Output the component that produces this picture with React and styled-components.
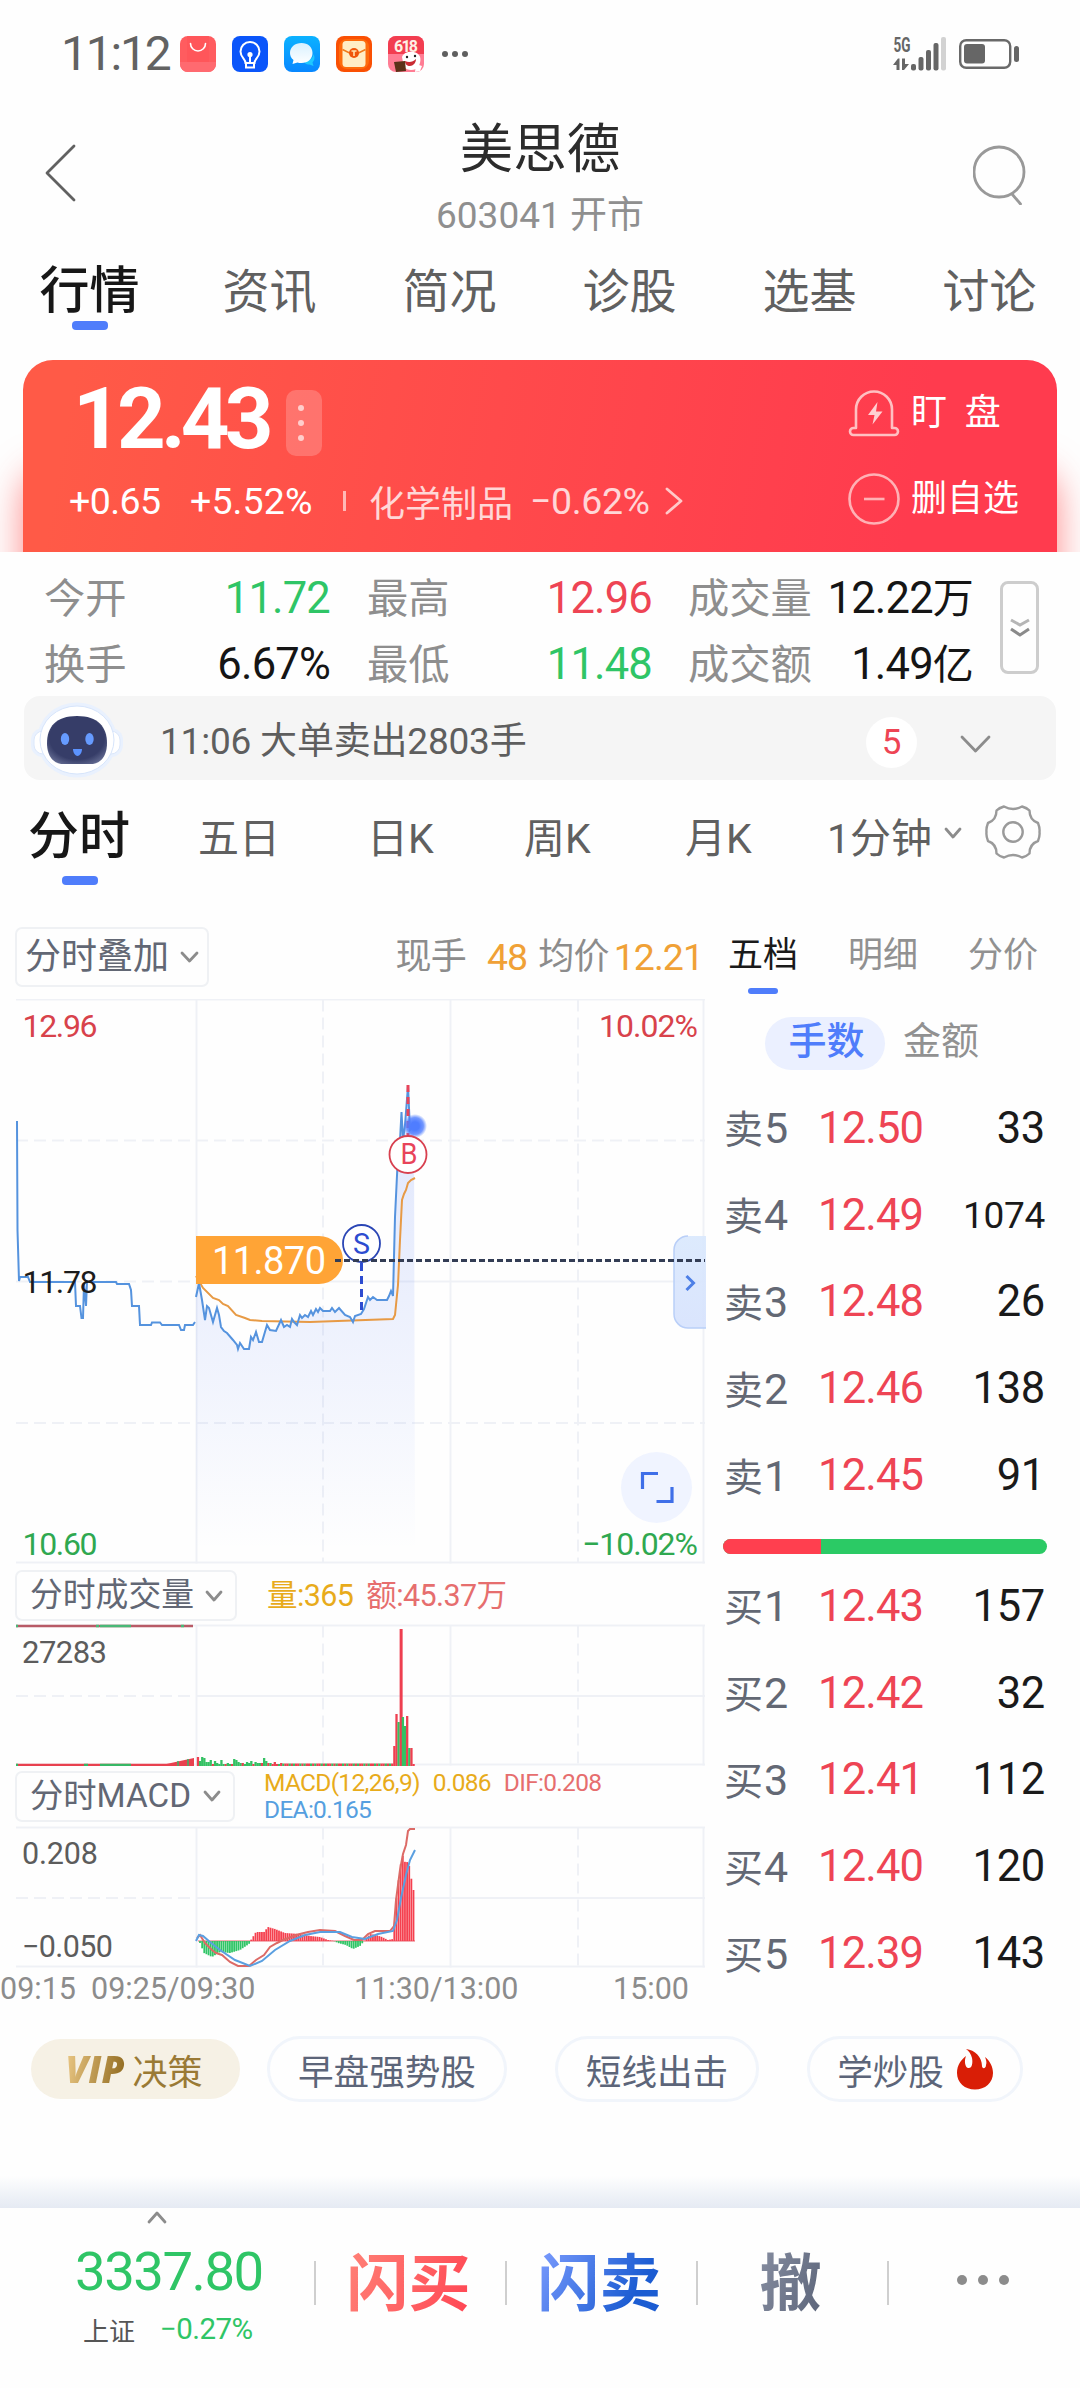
import React from "react";
import styled, { createGlobalStyle } from "styled-components";

const RED = "#ee4454";
const GREEN = "#2fc566";
const BLUE = "#4f7dfb";

const GlobalStyle = createGlobalStyle`
  * {
    box-sizing: border-box;
  }
  body {
    margin: 0;
    background: #fefefe;
    font-family: Roboto, "Noto Sans CJK SC", sans-serif;
    color: #1a1a1a;
  }
  svg {
    display: block;
    flex-shrink: 0;
  }
  svg text {
    font-family: Roboto, "Noto Sans CJK SC", sans-serif;
  }
`;

const Page = styled.div`
  width: 1080px;
  height: 2388px;
  display: flex;
  flex-direction: column;
  overflow: hidden;
`;

/* ---------- status bar ---------- */

const StatusBar = styled.div`
  display: flex;
  align-items: center;
  height: 108px;
  padding: 0 61px 0 61px;
`;

const Clock = styled.div`
  width: 119px;
  font-size: 48px;
  line-height: 60px;
  letter-spacing: -2.2px;
  color: #626262;
`;

const StatusIcons = styled.div`
  display: flex;
  align-items: center;
  gap: 16px;
`;

const StatusRight = styled.div`
  display: flex;
  align-items: center;
  gap: 12px;
  margin-left: auto;
`;

/* ---------- header ---------- */

const Header = styled.div`
  display: flex;
  justify-content: space-between;
  height: 132px;
  padding: 0 53px 0 45px;
`;

const BackButton = styled.div`
  padding-top: 36px;
  width: 68px;
`;

const SearchButton = styled.div`
  padding-top: 31px;
  display: flex;
  justify-content: flex-end;
  width: 60px;
`;

const TitleBox = styled.div`
  text-align: center;
  padding-top: 9px;
`;

const StockName = styled.div`
  font-size: 53.5px;
  line-height: 66px;
  color: #2c2c2c;
`;

const StockCode = styled.div`
  margin-top: 14px;
  font-size: 37px;
  line-height: 38px;
  color: #8f8f8f;
`;

const TopTabs = styled.div`
  display: grid;
  grid-template-columns: repeat(6, 180px);
  height: 120px;
`;

const TopTab = styled.div`
  display: flex;
  flex-direction: column;
  align-items: center;
  padding: 22px 1px 0 0;
  font-size: ${(props) => (props.$active ? "50px" : "47px")};
  font-weight: ${(props) => (props.$active ? 500 : 400)};
  line-height: 59px;
  color: ${(props) => (props.$active ? "#171717" : "#606060")};
`;

const Underline = styled.div`
  width: ${(props) => props.$width || 36}px;
  height: ${(props) => props.$height || 9}px;
  border-radius: 4px;
  background: ${BLUE};
`;

/* ---------- price card ---------- */

const CardWrap = styled.div`
  height: 192px;
  padding: 0 23px;
  overflow: hidden;
`;

const PriceCard = styled.div`
  display: flex;
  justify-content: space-between;
  height: 240px;
  padding: 19px 0 0 46px;
  border-radius: 30px;
  background: linear-gradient(100deg, #ff5a47 5%, #ff4a4b 45%, #ff3b4e 85%);
  box-shadow: 0 110px 36px 0 rgba(255, 60, 60, 0.6);
  color: #fff;
`;

const PriceRow = styled.div`
  display: flex;
  align-items: center;
  height: 80px;
`;

const Price = styled.div`
  width: 217px;
  padding-left: 4px;
  font-size: 85px;
  font-weight: 700;
  line-height: 80px;
  letter-spacing: -4.8px;
`;

const MoreButton = styled.div`
  display: flex;
  flex-direction: column;
  align-items: center;
  justify-content: center;
  gap: 9px;
  width: 36px;
  height: 66px;
  padding-right: 6px;
  margin-top: 8px;
  border-radius: 10px;
  background: rgba(255, 255, 255, 0.2);
`;

const Dot = styled.div`
  width: ${(props) => props.$size}px;
  height: ${(props) => props.$size}px;
  border-radius: 50%;
  background: ${(props) => props.$color};
`;

const ChangeRow = styled.div`
  display: flex;
  align-items: center;
  height: 60px;
  margin-top: 12px;
  font-size: 37.5px;
`;

const Change = styled.div`
  width: ${(props) => props.$width}px;
  letter-spacing: ${(props) => props.$spacing}px;
  white-space: nowrap;
`;

const Sector = styled.div`
  display: flex;
  align-items: center;
  margin-left: 31px;
  color: rgba(255, 255, 255, 0.78);
`;

const SectorSep = styled.div`
  width: 3px;
  height: 20px;
  margin-right: 23px;
  background: rgba(255, 255, 255, 0.6);
`;

const SectorName = styled.div`
  width: 161px;
  font-size: 36px;
  white-space: nowrap;
`;

const SectorChange = styled.div`
  width: 135px;
  letter-spacing: -0.4px;
  white-space: nowrap;
`;

const CardActions = styled.div`
  display: flex;
  flex-direction: column;
  gap: 26px;
  width: 209px;
  padding-top: 4px;
`;

const CardAction = styled.div`
  display: flex;
  align-items: center;
  gap: 11px;
  height: 60px;
  font-size: 36px;
  line-height: 50px;
  white-space: pre;
`;

/* ---------- quote stats ---------- */

const Stats = styled.div`
  display: flex;
  justify-content: space-between;
  height: 144px;
  padding: 14px 41px 0 44px;
`;

const StatsGrid = styled.div`
  display: grid;
  grid-template-columns: 323px 321px 285px;
  grid-auto-rows: 66px;
`;

const Stat = styled.div`
  display: flex;
  justify-content: space-between;
  align-items: center;
  padding-right: ${(props) => props.$gap || 0}px;
  font-size: 41.3px;
  line-height: 66px;
  color: #8e8e8e;
  white-space: nowrap;
`;

const StatValue = styled.span`
  font-size: 43.5px;
  letter-spacing: -0.8px;
  color: ${(props) => props.$color || "#151515"};
  small {
    font-size: 41px;
  }
`;

const ExpandButton = styled.div`
  display: flex;
  align-items: center;
  justify-content: center;
  width: 39px;
  height: 93px;
  margin-top: 15px;
  border: 3px solid #cdcdcd;
  border-radius: 8px;
`;

const AlertBar = styled.div`
  display: flex;
  align-items: center;
  height: 84px;
  margin: 0 24px;
  padding: 4px 65px 0 7px;
  border-radius: 16px;
  background: #f5f5f5;
`;

const AlertText = styled.div`
  flex: 1;
  margin: 3px 0 0 37px;
  font-size: 37px;
  line-height: 50px;
  color: #5e5e5e;
  letter-spacing: -0.2px;
`;

const AlertCount = styled.div`
  width: 51px;
  height: 51px;
  margin: 5px 43px 0 0;
  border-radius: 50%;
  background: #fff;
  color: ${RED};
  font-size: 35px;
  line-height: 52px;
  text-align: center;
`;

const AlertToggle = styled.div`
  margin-top: 8px;
`;

/* ---------- period tabs ---------- */

const PeriodTabs = styled.div`
  display: flex;
  align-items: flex-start;
  height: 138px;
  padding: 30px 0 0 28px;
`;

const PeriodTab = styled.div`
  width: ${(props) => props.$width}px;
  font-size: ${(props) => (props.$active ? "51px" : "41px")};
  font-weight: ${(props) => (props.$active ? 500 : 400)};
  line-height: ${(props) => (props.$active ? "54px" : "59px")};
  color: ${(props) => (props.$active ? "#171717" : "#606060")};
  white-space: nowrap;
  ${Underline} {
    margin: 12px 0 0 34px;
  }
`;

const PeriodSelect = styled(PeriodTab)`
  display: flex;
  align-items: flex-start;
  gap: 12px;
  svg {
    margin-top: 17px;
  }
`;

const SettingsButton = styled.div`
  margin: -5px 0 0 -1px;
`;

/* ---------- main area ---------- */

const Main = styled.div`
  display: flex;
  height: 1094px;
`;

const ChartColumn = styled.div`
  width: 706px;
  display: flex;
  flex-direction: column;
`;

const ChartHead = styled.div`
  display: flex;
  align-items: center;
  height: ${(props) => props.$height}px;
  padding: 0 ${(props) => props.$right || 0}px ${(props) => props.$bottom || 0}px 15px;
`;

const SelectBox = styled.div`
  display: flex;
  align-items: center;
  justify-content: space-between;
  width: ${(props) => props.$width}px;
  height: ${(props) => props.$height}px;
  padding: ${(props) => props.$pad};
  border: 2px solid #eff1f4;
  border-radius: 7px;
  font-size: ${(props) => props.$size}px;
  line-height: 1;
  color: #626774;
  white-space: nowrap;
`;

const Averages = styled.div`
  display: flex;
  margin-left: auto;
  font-size: 36px;
  line-height: 56px;
  color: #8c8c8c;
  letter-spacing: -0.7px;
  span {
    color: #f0a136;
    font-size: 37.5px;
    letter-spacing: -1px;
  }
  span:first-child {
    margin: 0 11px 0 21px;
  }
  span:last-child {
    margin-left: 5px;
  }
`;

const Indicator = styled.div`
  margin-left: ${(props) => props.$left}px;
  font-size: ${(props) => props.$size}px;
  line-height: 27px;
  letter-spacing: ${(props) => props.$spacing || 0}px;
  white-space: nowrap;
  span {
    margin-right: ${(props) => props.$gap}px;
    color: #e8ab1b;
  }
  em {
    font-style: normal;
    color: #e66e6e;
  }
  b {
    display: block;
    font-weight: 400;
    color: #559fe0;
  }
`;

const TimeAxis = styled.div`
  display: flex;
  height: 40px;
  font-size: 30.5px;
  line-height: 41px;
  color: #8c8c8c;
  div:nth-child(1) {
    width: 91px;
  }
  div:nth-child(2) {
    width: 263px;
  }
  div:nth-child(3) {
    width: 259px;
  }
`;

/* ---------- order book ---------- */

const OrderBook = styled.div`
  width: 374px;
  padding: 0 33px 0 17px;
`;

const BookTabs = styled.div`
  display: flex;
  justify-content: space-between;
  height: 99px;
  padding: 9px 9px 0 5px;
`;

const BookTab = styled.div`
  display: flex;
  flex-direction: column;
  align-items: center;
  gap: 4px;
  font-size: 35px;
  line-height: 57px;
  color: ${(props) => (props.$active ? "#1a1a1a" : "#919191")};
`;

const UnitSwitch = styled.div`
  display: flex;
  height: 68px;
  padding-left: 42px;
  font-size: 38px;
`;

const UnitActive = styled.div`
  width: 120px;
  height: 53px;
  border-radius: 27px;
  background: #ebf0ff;
  color: ${BLUE};
  font-weight: 500;
  line-height: 48px;
  text-align: center;
  text-indent: 3px;
`;

const Unit = styled.div`
  margin-left: 18px;
  line-height: 48px;
  color: #919191;
`;

const BookRow = styled.div`
  display: flex;
  align-items: center;
  height: 86.8px;
  padding-right: 2px;
  font-size: 43.5px;
`;

const BookLabel = styled.div`
  display: flex;
  align-items: center;
  width: 95px;
  font-size: 43px;
  color: #636874;
  span {
    margin: 0 1px 4px 1px;
    font-size: 39px;
  }
`;

const BookPrice = styled.div`
  letter-spacing: -0.8px;
  color: ${RED};
`;

const BookQty = styled.div`
  flex: 1;
  text-align: right;
  font-size: ${(props) => (props.$long ? "37px" : "43.5px")};
  letter-spacing: -0.3px;
`;

const RatioBar = styled.div`
  display: flex;
  height: 15px;
  margin: 20px 0 9px;
  border-radius: 8px;
  overflow: hidden;
  background: #2bca65;
`;

const RatioBuy = styled.div`
  width: 98px;
  background: #ff3f4f;
`;

/* ---------- shortcuts ---------- */

const Shortcuts = styled.div`
  display: flex;
  align-items: center;
  height: 66px;
  margin-top: 24px;
  padding-left: 31px;
`;

const Shortcut = styled.div`
  display: flex;
  align-items: center;
  justify-content: center;
  gap: 13px;
  width: ${(props) => props.$width}px;
  height: 66px;
  margin-right: 48px;
  border: 3px solid #f1f5fb;
  border-radius: 33px;
  font-size: 35.6px;
  color: #5c6579;
`;

const VipShortcut = styled(Shortcut)`
  gap: 5px;
  height: 60px;
  margin-right: 27px;
  padding-right: 3px;
  border: none;
  background: #f6f1e5;
  font-size: 35px;
  color: #9a7a35;
`;

const Vip = styled.span`
  font-family: "Open Sans", Roboto, sans-serif;
  font-size: 37px;
  line-height: 48px;
  font-weight: 800;
  font-style: italic;
  padding-right: 3px;
  background: linear-gradient(100deg, #ecc986, #8a6418);
  background-clip: text;
  -webkit-background-clip: text;
  color: transparent;
`;

/* ---------- bottom bar ---------- */

const BottomShade = styled.div`
  height: 32px;
  margin-top: auto;
  background: linear-gradient(to bottom, #fefefe, #f0f3f8 55%, #e5eaf3);
`;

const BottomBar = styled.div`
  display: flex;
  height: 180px;
`;

const IndexBox = styled.div`
  width: 314px;
  padding: 3px 0 0 75px;
  svg {
    margin-left: 72px;
  }
`;

const IndexValue = styled.div`
  margin-top: 19px;
  font-size: 54.5px;
  line-height: 56px;
  letter-spacing: -1.5px;
  color: ${GREEN};
`;

const IndexInfo = styled.div`
  display: flex;
  align-items: center;
  gap: 25px;
  height: 40px;
  margin-top: 10px;
  padding-left: 8px;
  font-size: 26px;
  color: #555;
  span {
    font-size: 29.5px;
    letter-spacing: -0.6px;
    color: ${GREEN};
  }
`;

const BottomDivider = styled.div`
  width: 2px;
  height: 44px;
  margin-top: 53px;
  background: #cfcfcf;
`;

const TradeButton = styled.div`
  width: 189px;
  padding: 35px 4px 0 0;
  text-align: center;
  span {
    font-size: 62px;
    font-weight: 700;
    line-height: 84px;
    background: ${(props) => props.$fill};
    background-clip: text;
    -webkit-background-clip: text;
    color: transparent;
  }
`;

const MoreActions = styled.div`
  display: flex;
  gap: 11px;
  margin: 67px 0 0 68px;
`;

function Chevron({ w, h, dir = "down", color = "#8c8c8c", stroke = 2.8 }) {
  const points = {
    down: `2,2 ${w / 2},${h - 2} ${w - 2},2`,
    up: `2,${h - 2} ${w / 2},2 ${w - 2},${h - 2}`,
    right: `2,2 ${w - 2},${h / 2} 2,${h - 2}`,
    left: `${w - 2},2 2,${h / 2} ${w - 2},${h - 2}`,
  }[dir];
  return (
    <svg width={w} height={h} fill="none" stroke={color} strokeWidth={stroke} strokeLinecap="round" strokeLinejoin="round">
      <polyline points={points} />
    </svg>
  );
}

function AppIcons() {
  return (
    <StatusIcons>
      <svg width="36" height="36" viewBox="0 0 36 36">
        <rect width="36" height="36" rx="8" fill="#ff5c5f" />
        <path d="M7 0h22v36H7z" fill="#ff5257" opacity=".6" />
        <path d="M0 26h36v2a8 8 0 0 1-8 8H8a8 8 0 0 1-8-8z" fill="#ff6a70" />
        <path d="M10.500 7.500a7.500 7.500 0 0 0 15 0" fill="none" stroke="#fff" strokeWidth="1.600" strokeLinecap="round" />
      </svg>
      <svg width="36" height="36" viewBox="0 0 36 36" fill="none" stroke="#fff" strokeWidth="2">
        <rect width="36" height="36" rx="8" fill="#0a55fa" stroke="none" />
        <path d="M13.500 27c0-4-5-5.500-5-11.500a9.500 9.500 0 0 1 19 0c0 6-5 7.500-5 11.500z" />
        <path d="M14 28v3.500h8V28M18 19v8" />
        <circle cx="18" cy="18.500" r="1.600" fill="#fff" />
      </svg>
      <svg width="36" height="36" viewBox="0 0 36 36">
        <defs>
          <linearGradient id="chatBg" x1="0" y1="0" x2="0" y2="1">
            <stop offset="0" stopColor="#0cb2ff" />
            <stop offset="1" stopColor="#0887ff" />
          </linearGradient>
          <linearGradient id="chatBubble" x1="0" y1="0" x2="0" y2="1">
            <stop offset="0" stopColor="#d8f1ff" />
            <stop offset="1" stopColor="#fff" />
          </linearGradient>
        </defs>
        <rect width="36" height="36" rx="8" fill="url(#chatBg)" />
        <path d="M20 24c4 2 9-1 9.500-6 2 4 .5 7-1 8.500l1 3.500-4-1.500c-3 .6-5-1-5.500-4.500z" fill="#1fc8ff" />
        <path d="M17.500 7C24 7 28.500 11 28.500 17S24 27 17.500 27c-1.500 0-3-.2-4-.6L8.500 28l1-4C7 22 6 19.500 6 17 6 11 11 7 17.500 7z" fill="url(#chatBubble)" />
      </svg>
      <svg width="36" height="36" viewBox="0 0 36 36">
        <rect width="36" height="36" rx="8" fill="#fa5003" />
        <rect x="3" y="3" width="30" height="30" rx="8" fill="#ff7d13" opacity=".6" />
        <rect x="6.500" y="5" width="23" height="26" rx="3.500" fill="#ffedc6" />
        <path d="M6.500 13.500l7 3.500h9l7-3.500" fill="none" stroke="#f07a1a" strokeWidth="1.500" />
        <circle cx="18" cy="17" r="5" fill="#f0560b" />
        <path d="M15.500 15h5M18 15v5" stroke="#ffe3b0" strokeWidth="1.600" />
      </svg>
      <svg width="36" height="36" viewBox="0 0 36 36">
        <rect width="36" height="36" rx="8" fill="#ff7d94" />
        <path d="M0 18V8a8 8 0 0 1 8-8h20a8 8 0 0 1 8 8v10z" fill="#f23d50" />
        <text x="6" y="16" fontSize="16" fontWeight="700" fill="#fff0e4" textLength="24">618</text>
        <path d="M14 21c2-6 13-7 17-2 3 3 1 12-3 14-5 2-9 1-12-2z" fill="#fff" />
        <circle cx="19" cy="21" r="1.200" fill="#222" />
        <circle cx="27" cy="20" r="1.200" fill="#222" />
        <path d="M17 25c4 2 8 1 11-2 0 4-3 7-6 7s-5-2-5-5z" fill="#c92b33" />
        <path d="M6 26l11-1 1 10-10 1z" fill="#5b3218" />
        <path d="M28 28l6 2-2 5-5 1z" fill="#fff" />
      </svg>
      <svg width="28" height="8" viewBox="0 0 28 8" fill="#5f5f5f">
        <circle cx="5" cy="4" r="3" />
        <circle cx="15" cy="4" r="3" />
        <circle cx="25" cy="4" r="3" />
      </svg>
    </StatusIcons>
  );
}

function Signal() {
  return (
    <svg width="54" height="48" viewBox="0 -6 54 48" fill="#666">
      <text x="0.500" y="16" fontSize="20" fontWeight="700" textLength="17" lengthAdjust="spacingAndGlyphs">5G</text>
      <path d="M0 29l5-6.500h1.500V34H3.500v-5zM9 22.500h3V28h4l-5 6H9z" />
      <rect x="18" y="28" width="5" height="6.500" rx="2" />
      <rect x="25.500" y="21" width="5" height="13.500" rx="2" />
      <rect x="33" y="14" width="5" height="20.500" rx="2" />
      <rect x="40.500" y="7" width="5" height="27.500" rx="2" />
      <rect x="48" y="1" width="5" height="33.500" rx="2" fill="#d2d2d2" />
    </svg>
  );
}

function Battery() {
  return (
    <svg width="60" height="30" viewBox="0 0 60 30">
      <rect x="1.200" y="1.200" width="50" height="27.600" rx="6" fill="none" stroke="#696969" strokeWidth="2.400" />
      <rect x="5" y="5" width="21" height="19.500" rx="3" fill="#666" />
      <rect x="55" y="7" width="5" height="16" rx="2.500" fill="#666" />
    </svg>
  );
}

function AlarmIcon() {
  return (
    <svg width="52" height="48" viewBox="0 0 52 48" fill="none" stroke="#ffc0c2" strokeWidth="2.600" strokeLinejoin="round">
      <path d="M8 39V20.500a18 18 0 0 1 36 0V39h2.500a3.500 3.500 0 0 1 0 7h-41a3.500 3.500 0 0 1 0-7z" />
      <path d="M29.500 13L20 26h6.500L24.500 35.500 34.500 22.500h-6.500z" fill="#ffd0d2" stroke="none" />
    </svg>
  );
}

function RemoveIcon() {
  return (
    <svg width="52" height="52" viewBox="0 0 52 52" fill="none" stroke="#ffb1b5" strokeWidth="2.600">
      <circle cx="26" cy="26" r="24.500" />
      <path d="M16 26h20.500" />
    </svg>
  );
}

function Robot() {
  return (
    <svg width="92" height="76" viewBox="0 0 92 76">
      <defs>
        <radialGradient id="face" cx=".5" cy=".45" r=".65">
          <stop offset=".7" stopColor="#363d68" />
          <stop offset="1" stopColor="#6a7298" />
        </radialGradient>
      </defs>
      <ellipse cx="46" cy="38" rx="40" ry="37.500" fill="#e9f1fe" />
      <rect x="0" y="26" width="92" height="29" rx="12" fill="#e9f1fe" />
      <rect x="3" y="29" width="86" height="23" rx="9" fill="#fff" stroke="#dce8fb" />
      <ellipse cx="46" cy="38" rx="37" ry="34" fill="#fff" stroke="#d7e5fb" />
      <path d="M46 14c21 0 30 11 30 27 0 15-8 21-16 21H32c-8 0-16-6-16-21 0-16 9-27 30-27z" fill="url(#face)" />
      <ellipse cx="34" cy="37" rx="4.200" ry="6" fill="#669bff" />
      <ellipse cx="58.500" cy="37" rx="4.200" ry="6" fill="#669bff" />
      <path d="M42 47h9c0 4-2.500 7-4.500 7S42 51 42 47z" fill="#5c93ff" />
    </svg>
  );
}

function Gear() {
  return (
    <svg width="56" height="54" viewBox="-28 -27 56 54" fill="none" stroke="#9a9a9a" strokeWidth="2.400" strokeLinejoin="round">
      <path d="M-9-25.500Q0-20.500 9-25.500Q14-24 16.500-21.500Q16.500-12 25-9Q27-4 26.500 0Q27 4 25 9Q16.500 12 16.500 21.500Q14 24 9 25.500Q0 20.500 -9 25.500Q-14 24 -16.500 21.500Q-16.500 12 -25 9Q-27 4 -26.500 0Q-27-4 -25-9Q-16.500-12 -16.500-21.500Q-14-24 -9-25.500Z" />
      <circle r="9.700" />
    </svg>
  );
}

const preLine =
  "17,1121 17.500,1230 19,1281 20,1277 28,1277 30,1282 75,1282 76,1306 80,1306 81.500,1318 83,1318 84,1284 86,1306 87,1282 116,1282 117,1284 129,1284 131,1290 132,1306 139,1306 140,1325 151,1325 152,1322.500 160,1322.500 162,1325 179,1325 181,1330 184,1330 185,1325 193,1325 195,1322";
const priceLine =
  "196,1297 199,1283 202,1300 205,1320 207,1306 209,1308 213,1322 217,1308 219,1315 221,1327 224,1331 227,1333 233,1340 237,1345 238,1349 240,1343 244,1349 249,1349 251,1337 253,1340 256,1332 259,1342 262,1342 267,1325 270,1330 276,1331 281,1320 284,1327 287,1325 290,1327 292,1319 294,1322 297,1325 300,1315 302,1318 305,1315 308,1317 311,1311 313,1315 316,1309 318,1312 320,1308 323,1311 330,1311 332,1308 335,1312 339,1308 345,1315 350,1317 353,1322 355,1316 361,1314 364,1309 368,1297 370,1300 373,1297 377,1300 387,1300 389,1296 391,1291 393,1296 395,1217 397.500,1165 400,1140 401.500,1112 403,1140 405,1125 408,1086 410,1130 414,1126";
const avgLine =
  "196,1276 203,1288 213,1298 219,1300 223,1304 228,1306 236,1315 245,1318 250,1320 262,1321 310,1322 393,1319 395,1315 396,1305 398,1285 400,1240 402,1200 404,1194 406,1190 408,1183 411,1180 415,1178";

function GridLines({ top, bottom, mid }) {
  return (
    <g stroke="#eff1f6" strokeWidth="2" fill="none">
      <path d={`M16 ${top}H705`} />
      <path d={`M196.500 ${top}V${bottom + 1}M450.500 ${top}V${bottom + 1}M703.500 ${top}V${bottom + 1}`} />
      <path d={`M323 ${top}V${bottom}M578 ${top}V${bottom}`} strokeDasharray="12 6" />
      <path d={`M16 ${mid}H196`} strokeDasharray="12 6" />
      <path d={`M196 ${mid}H705`} />
      <path d={`M16 ${bottom}H705`} />
    </g>
  );
}

function PriceChart() {
  return (
    <svg width="706" height="568" viewBox="0 999 706 568">
      <defs>
        <linearGradient id="area" x1="0" y1="1130" x2="0" y2="1550" gradientUnits="userSpaceOnUse">
          <stop offset="0" stopColor="#5f83f5" stopOpacity=".18" />
          <stop offset=".6" stopColor="#5f83f5" stopOpacity=".08" />
          <stop offset="1" stopColor="#5f83f5" stopOpacity="0" />
        </linearGradient>
        <radialGradient id="pulse">
          <stop offset=".35" stopColor="#4f7dff" />
          <stop offset=".7" stopColor="#4f7dff" stopOpacity=".8" />
          <stop offset="1" stopColor="#4f7dff" stopOpacity="0" />
        </radialGradient>
        <linearGradient id="handle" x1="0" y1="0" x2="0" y2="1">
          <stop offset="0" stopColor="#d9e8fd" />
          <stop offset="1" stopColor="#d6e2fd" />
        </linearGradient>
      </defs>
      <GridLines top={999.5} bottom={1562.5} mid={1281.5} />
      <path d="M16 1140.500H705M16 1423H705" stroke="#eff1f6" strokeWidth="2" strokeDasharray="12 6" />
      <polygon points={`196,1562 ${priceLine} 415,1562`} fill="url(#area)" />
      <polyline points={preLine} fill="none" stroke="#5593de" strokeWidth="2" />
      <polyline points={avgLine} fill="none" stroke="#e79a45" strokeWidth="2" />
      <polyline points={priceLine} fill="none" stroke="#5593de" strokeWidth="2" />
      <path d="M674 1250a14 14 0 0 1 14-14h18v92h-18a14 14 0 0 1-14-14z" fill="url(#handle)" fillOpacity=".9" />
      <path d="M674 1250a14 14 0 0 1 14-14M674 1250v64a14 14 0 0 0 14 14h18" fill="none" stroke="#b9cff8" strokeWidth="1.500" />
      <path d="M686.500 1276l7 7-7 7" fill="none" stroke="#4d7fe6" strokeWidth="3" />
      <path d="M408 1085V1135" stroke="#e8445a" strokeWidth="3" strokeDasharray="7 5" />
      <circle cx="415" cy="1126" r="12" fill="url(#pulse)" />
      <circle cx="408" cy="1154.500" r="18.500" fill="#fff" stroke="#d8404f" strokeWidth="1.800" />
      <text x="400.500" y="1164" fontSize="29" fill="#e8445a" textLength="17" lengthAdjust="spacingAndGlyphs">B</text>
      <path d="M196 1236h123a24 24 0 0 1 0 48H196z" fill="#ffa436" />
      <text x="212" y="1274" fontSize="38" fill="#fff" textLength="114">11.870</text>
      <circle cx="361.500" cy="1243.500" r="18.500" fill="#fff" stroke="#2b46b5" strokeWidth="1.800" />
      <text x="353" y="1253.500" fontSize="29" fill="#2d4cd0" textLength="17" lengthAdjust="spacingAndGlyphs">S</text>
      <path d="M361.500 1263V1314" stroke="#2d4cd0" strokeWidth="3" strokeDasharray="8 5" />
      <path d="M335 1260.500H705" stroke="#333d55" strokeWidth="3" strokeDasharray="6 3" />
      <circle cx="656.500" cy="1487.500" r="35.500" fill="#f0f4ff" />
      <path d="M642.500 1489V1473.500H658M656.500 1501.500H672V1487" fill="none" stroke="#3f6fe8" strokeWidth="3.200" />
      <g fontSize="32">
        <text x="22.500" y="1037" fill="#d8424b" textLength="75">12.96</text>
        <text x="22.500" y="1292.500" fill="#1c1c1c" textLength="75">11.78</text>
        <text x="22.500" y="1554.500" fill="#2fa850" textLength="75">10.60</text>
        <text x="599" y="1037" fill="#d8424b" textLength="99">10.02%</text>
        <text x="582" y="1554.500" fill="#2fa850" textLength="116">−10.02%</text>
      </g>
    </svg>
  );
}

// one bar per minute since the open, negative = falling minute
const volumes = [
  9, -5, -9, -8, -4, -4, -6, 2, -5, -3, -2, -6, -2, 2, -3, -2, 2, -7, -6, -4, -3, 3, -2, -4, -3,
  -5, 2, -4, -3, -3, 3, -8, -5, 3, -3, 2, 4, 2, -2, 3,
];
for (let i = 40; i < 92; i++) volumes.push((i * 7) % 5 < 2 ? -2.5 : 2.5);
volumes.push(20, 52, -44, 137, -49, -40, 50, -18, 18, 2);

function VolumeChart() {
  return (
    <svg width="706" height="142" viewBox="0 1624 706 142">
      <GridLines top={1625.5} bottom={1764.5} mid={1696} />
      <path d="M16 1626H193" stroke="#b85a66" strokeWidth="2.500" />
      <path d="M16 1626h2M96 1626h3M100 1626h31M181 1626h3" stroke="#49b877" strokeWidth="2.500" />
      <path d="M16 1765H193" stroke="#e8414f" strokeWidth="2.500" />
      <path d="M16 1765h2M84 1765h4M100 1765h31" stroke="#37b765" strokeWidth="2.500" />
      <path d="M162 1765l18-4 14-3v8z" fill="#e8414f" />
      <path d="M178 1761v5M188 1759v7" stroke="#37b765" strokeWidth="1.500" />
      {volumes.map((v, i) => (
        <rect
          key={i}
          x={196.8 + i * 2.135}
          y={1766 - Math.abs(v)}
          width={Math.abs(v) > 100 ? 3 : 2.3}
          height={Math.abs(v)}
          fill={v > 0 ? "#ee3f50" : "#34c163"}
        />
      ))}
      <text x="22" y="1663" fontSize="31" fill="#5c5c5c" textLength="85">27283</text>
    </svg>
  );
}

const macdBars = [
  [200, -2], [204, -12], [212, -16], [220, -11], [230, -12], [240, -9], [249, -3], [251, 1], [256, 9],
  [264, 9], [268, 14], [275, 12], [285, 8], [300, 7], [310, 5], [320, 4], [328, 1], [334, 0], [338, -2],
  [346, -4], [353, -8], [360, -5], [365, 1], [370, 7], [376, 6], [382, 4], [388, 1], [393, 2], [395, 20],
  [397, 52], [399.5, 66], [401.7, 86], [404, 84], [406, 74], [408, 83], [410, 70], [412.3, 57], [414.5, 46],
];

function macdAt(x) {
  for (let i = 1; i < macdBars.length; i++) {
    const [x0, y0] = macdBars[i - 1];
    const [x1, y1] = macdBars[i];
    if (x <= x1) return y0 + ((y1 - y0) * (x - x0)) / (x1 - x0);
  }
  return 46;
}

function MacdChart() {
  const bars = Array.from({ length: 101 }, (_, i) => 200 + i * 2.135);
  return (
    <svg width="706" height="142" viewBox="0 1826 706 142">
      <GridLines top={1827.5} bottom={1966.5} mid={1898} />
      <path d="M198 1941H415" stroke="#e8606c" strokeWidth="1" />
      {bars.map((x) => {
        const h = macdAt(x);
        return (
          <rect
            key={x}
            x={x - 0.9}
            y={h > 0 ? 1941 - h : 1941}
            width="1.800"
            height={Math.abs(h)}
            fill={h > 0 ? "#f5404f" : "#2fc566"}
          />
        );
      })}
      <polyline
        points="197,1938 200,1935 205,1943 212,1950 216,1953 222,1955 230,1962 238,1966 249,1966 256,1960 264,1955 270,1947 277,1943 283,1940 296,1935 308,1932 320,1930 335,1931 345,1936 354,1940 362,1940 368,1934 375,1931 390,1931 394,1926 396,1900 400,1870 403,1854 406,1845 408,1831 410,1829 415,1829"
        fill="none"
        stroke="#dc6a66"
        strokeWidth="2"
      />
      <polyline
        points="196,1941 199,1935 203,1936 210,1942 220,1950 235,1960 250,1966 262,1961 275,1950 290,1941 305,1935 320,1932 340,1932 352,1937 365,1939 378,1934 393,1931 397,1920 401,1898 406,1875 410,1860 415,1850"
        fill="none"
        stroke="#5a9fe0"
        strokeWidth="2"
      />
      <g fontSize="30.500" fill="#5c5c5c">
        <text x="22" y="1864" textLength="76">0.208</text>
        <text x="22" y="1957" textLength="91">−0.050</text>
      </g>
    </svg>
  );
}

const stats = [
  ["今开", "11.72", GREEN],
  ["最高", "12.96", RED],
  ["成交量", "12.22", null, "万"],
  ["换手", "6.67%"],
  ["最低", "11.48", GREEN],
  ["成交额", "1.49", null, "亿"],
];

const sells = [
  ["5", "12.50", "33"],
  ["4", "12.49", "1074"],
  ["3", "12.48", "26"],
  ["2", "12.46", "138"],
  ["1", "12.45", "91"],
];
const buys = [
  ["1", "12.43", "157"],
  ["2", "12.42", "32"],
  ["3", "12.41", "112"],
  ["4", "12.40", "120"],
  ["5", "12.39", "143"],
];

function BookRows({ side, rows }) {
  return rows.map(([level, price, qty]) => (
    <BookRow key={level}>
      <BookLabel>
        <span>{side}</span>
        {level}
      </BookLabel>
      <BookPrice>{price}</BookPrice>
      <BookQty $long={qty.length > 3}>{qty}</BookQty>
    </BookRow>
  ));
}

function App() {
  return (
    <Page>
      <GlobalStyle />
      <StatusBar>
        <Clock>11:12</Clock>
        <AppIcons />
        <StatusRight>
          <Signal />
          <Battery />
        </StatusRight>
      </StatusBar>

      <Header>
        <BackButton>
          <Chevron w={31} h={58} dir="left" color="#616161" />
        </BackButton>
        <TitleBox>
          <StockName>美思德</StockName>
          <StockCode>603041 开市</StockCode>
        </TitleBox>
        <SearchButton>
          <svg width="54" height="66" viewBox="0 0 54 66" fill="none" stroke="#999" strokeWidth="2.800" strokeLinecap="round">
            <circle cx="26" cy="33" r="25" />
            <path d="M39 55l8.500 10" />
          </svg>
        </SearchButton>
      </Header>

      <TopTabs>
        {["行情", "资讯", "简况", "诊股", "选基", "讨论"].map((name, i) => (
          <TopTab key={name} $active={i === 0}>
            {name}
            {i === 0 && <Underline />}
          </TopTab>
        ))}
      </TopTabs>

      <CardWrap>
        <PriceCard>
          <div>
            <PriceRow>
              <Price>12.43</Price>
              <MoreButton>
                <Dot $size={6} $color="rgba(255,255,255,.65)" />
                <Dot $size={6} $color="rgba(255,255,255,.65)" />
                <Dot $size={6} $color="rgba(255,255,255,.65)" />
              </MoreButton>
            </PriceRow>
            <ChangeRow>
              <Change $width={121} $spacing={-0.6}>+0.65</Change>
              <Change $width={122} $spacing={0.1}>+5.52%</Change>
              <Sector>
                <SectorSep />
                <SectorName>化学制品</SectorName>
                <SectorChange>−0.62%</SectorChange>
                <Chevron w={18} h={28} dir="right" color="#ffc9c9" />
              </Sector>
            </ChangeRow>
          </div>
          <CardActions>
            <CardAction>
              <AlarmIcon />
              {"盯  盘"}
            </CardAction>
            <CardAction>
              <RemoveIcon />
              删自选
            </CardAction>
          </CardActions>
        </PriceCard>
      </CardWrap>

      <Stats>
        <StatsGrid>
          {stats.map(([label, value, color, unit], i) => (
            <Stat key={label} $gap={[37, 36, 0][i % 3]}>
              {label}
              <StatValue $color={color}>
                {value}
                {unit && <small>{unit}</small>}
              </StatValue>
            </Stat>
          ))}
        </StatsGrid>
        <ExpandButton>
          <svg width="20" height="20" viewBox="0 0 20 20" fill="none" strokeWidth="3">
            <path d="M1 2l9 5 9-5" stroke="#b5b5b5" />
            <path d="M1 11l9 6 9-6" stroke="#8a8a8a" />
          </svg>
        </ExpandButton>
      </Stats>

      <AlertBar>
        <Robot />
        <AlertText>11:06 大单卖出2803手</AlertText>
        <AlertCount>5</AlertCount>
        <AlertToggle>
          <Chevron w={31} h={18} />
        </AlertToggle>
      </AlertBar>

      <PeriodTabs>
        <PeriodTab $active $width={170}>
          分时
          <Underline />
        </PeriodTab>
        <PeriodTab $width={169}>五日</PeriodTab>
        <PeriodTab $width={157}>日K</PeriodTab>
        <PeriodTab $width={161}>周K</PeriodTab>
        <PeriodTab $width={142}>月K</PeriodTab>
        <PeriodSelect $width={159}>
          1分钟
          <Chevron w={18} h={12} />
        </PeriodSelect>
        <SettingsButton>
          <Gear />
        </SettingsButton>
      </PeriodTabs>

      <Main>
        <ChartColumn>
          <ChartHead $height={81} $bottom={3} $right={3}>
            <SelectBox $width={194} $height={60} $size={36} $pad="0 8px 0 8px">
              分时叠加
              <Chevron w={19} h={12} />
            </SelectBox>
            <Averages>
              现手<span>48</span>均价<span>12.21</span>
            </Averages>
          </ChartHead>
          <PriceChart />
          <ChartHead $height={57}>
            <SelectBox $width={222} $height={51} $size={32.8} $pad="0 12px 0 13px">
              分时成交量
              <Chevron w={18} h={12} />
            </SelectBox>
            <Indicator $left={30} $size={30.5} $spacing={-0.6} $gap={13}>
              <span>量:365</span>
              <em>额:45.37万</em>
            </Indicator>
          </ChartHead>
          <VolumeChart />
          <ChartHead $height={60}>
            <SelectBox $width={220} $height={51} $size={33.3} $pad="0 12px 0 13px">
              分时MACD
              <Chevron w={18} h={12} />
            </SelectBox>
            <Indicator $left={29} $size={24.5} $spacing={-0.7} $gap={13}>
              <span>MACD(12,26,9)</span>
              <span>0.086</span>
              <em>DIF:0.208</em>
              <b>DEA:0.165</b>
            </Indicator>
          </ChartHead>
          <MacdChart />
          <TimeAxis>
            <div>09:15</div>
            <div>09:25/09:30</div>
            <div>11:30/13:00</div>
            <div>15:00</div>
          </TimeAxis>
        </ChartColumn>

        <OrderBook>
          <BookTabs>
            <BookTab $active>
              五档
              <Underline $width={30} $height={6} />
            </BookTab>
            <BookTab>明细</BookTab>
            <BookTab>分价</BookTab>
          </BookTabs>
          <UnitSwitch>
            <UnitActive>手数</UnitActive>
            <Unit>金额</Unit>
          </UnitSwitch>
          <BookRows side="卖" rows={sells} />
          <RatioBar>
            <RatioBuy />
          </RatioBar>
          <BookRows side="买" rows={buys} />
        </OrderBook>
      </Main>

      <Shortcuts>
        <VipShortcut $width={209}>
          <Vip>VIP</Vip>决策
        </VipShortcut>
        <Shortcut $width={240}>早盘强势股</Shortcut>
        <Shortcut $width={204}>短线出击</Shortcut>
        <Shortcut $width={216}>
          学炒股
          <svg width="36" height="42" viewBox="0 0 36 42" fill="#d91e06">
            <path d="M9 1c9 1 16 8 16 17 0 3 4 3 4-1 1-3 0-5-1-8 5 4 8 10 8 16 0 10-8 16.500-18 16.500S0 35 0 25C0 17 4 12 9 8c-2 5-1 11 2 12 4 1 5-5 4-10-1-4-3-7-6-9z" />
          </svg>
        </Shortcut>
      </Shortcuts>

      <BottomShade />
      <BottomBar>
        <IndexBox>
          <Chevron w={20} h={13} dir="up" />
          <IndexValue>3337.80</IndexValue>
          <IndexInfo>
            上证<span>−0.27%</span>
          </IndexInfo>
        </IndexBox>
        <BottomDivider />
        <TradeButton $fill="linear-gradient(110deg, #ff8277, #ff4452)">
          <span>闪买</span>
        </TradeButton>
        <BottomDivider />
        <TradeButton $fill="linear-gradient(120deg, #7d9dff, #1b5cd2 75%)">
          <span>闪卖</span>
        </TradeButton>
        <BottomDivider />
        <TradeButton $fill="linear-gradient(110deg, #868da0, #5b6479)">
          <span>撤</span>
        </TradeButton>
        <BottomDivider />
        <MoreActions>
          <Dot $size={10} $color="#8c8c8c" />
          <Dot $size={10} $color="#8c8c8c" />
          <Dot $size={10} $color="#8c8c8c" />
        </MoreActions>
      </BottomBar>
    </Page>
  );
}

export default App;
